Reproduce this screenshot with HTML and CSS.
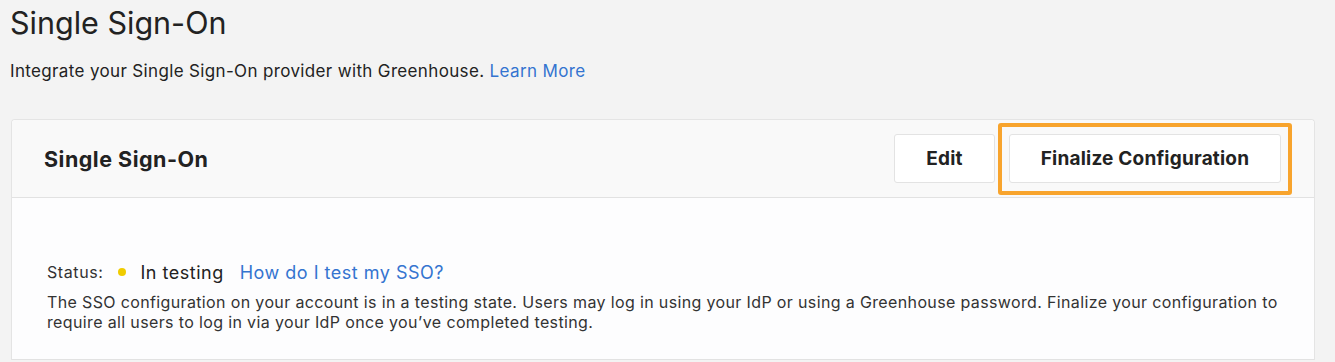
FILE: index.html
```html
<!DOCTYPE html>
<html lang="en">
<head>
<meta charset="utf-8">
<title>Single Sign-On</title>
<link rel="stylesheet" href="styles.css">
</head>
<body>
<main class="page">
  <h1 class="page-title">Single Sign-On</h1>
  <p class="page-intro">Integrate your Single Sign-On provider with Greenhouse. <a class="link" href="#">Learn More</a></p>

  <section class="card">
    <header class="card-header">
      <h2 class="card-title">Single Sign-On</h2>
      <div class="actions">
        <button class="btn btn-edit" type="button">Edit</button>
        <div class="highlight">
          <button class="btn btn-finalize" type="button">Finalize Configuration</button>
        </div>
      </div>
    </header>
    <div class="card-body">
      <div class="status-row">
        <span class="status-label">Status:</span>
        <span class="status-dot"></span>
        <span class="status-value">In testing</span>
        <a class="link status-link" href="#">How do I test my SSO?</a>
      </div>
      <p class="status-desc">The SSO configuration on your account is in a testing state. Users may log in using your IdP or using a Greenhouse password. Finalize your configuration to require all users to log in via your IdP once you’ve completed testing.</p>
    </div>
  </section>
</main>
</body>
</html>
```

FILE: styles.css
```css
* { box-sizing: border-box; }

html, body {
  margin: 0;
  padding: 0;
}

body {
  background: #f3f3f3;
  font-family: Inter, "Liberation Sans", sans-serif;
  color: #222;
}

.page {
  padding: 5px 0 0 10px;
}

.page-title {
  margin: 0;
  font-size: 30.5px;
  font-weight: 400;
  line-height: 36px;
  color: #222;
}

.page-intro {
  margin: 18px 0 0;
  font-size: 17px;
  line-height: 24px;
  letter-spacing: 0.35px;
  color: #222;
}

.link {
  color: #3474d0;
  text-decoration: none;
}

.card {
  margin: 36px 0 0 1px;
  width: 1304px;
  border: 1px solid #e4e4e4;
  border-bottom: none;
  border-radius: 4px 4px 0 0;
  background: #fff;
}

.card-header {
  height: 78px;
  display: flex;
  align-items: center;
  justify-content: space-between;
  padding: 0 22px 0 32px;
  background: #f9f9f9;
  border-bottom: 1px solid #e2e2e2;
  border-radius: 4px 4px 0 0;
}

.card-title {
  margin: 0;
  font-size: 21.5px;
  font-weight: 700;
  letter-spacing: 0.5px;
  color: #222;
}

.actions {
  display: flex;
  align-items: center;
  gap: 3px;
}

.btn {
  height: 49px;
  background: #fff;
  border: 1px solid #e3e3e3;
  border-radius: 3px;
  font-family: inherit;
  font-size: 19px;
  font-weight: 700;
  letter-spacing: 0.2px;
  color: #222;
  cursor: pointer;
}

.btn-edit {
  width: 101px;
}

.highlight {
  border: 4px solid #f8a42d;
  border-radius: 3px;
  padding: 7px 7px 8px;
}

.btn-finalize {
  width: 272px;
  display: block;
}

.card-body {
  height: 162px;
  padding: 62px 35px 0;
  background: #fdfdfe;
  border-bottom: 1px solid #e2e2e2;
}

.status-row {
  display: flex;
  align-items: center;
  height: 24px;
  font-size: 18px;
  letter-spacing: 0.5px;
}

.status-label {
  font-size: 16px;
  letter-spacing: 0.6px;
  color: #333;
}

.status-dot {
  width: 8px;
  height: 8px;
  border-radius: 50%;
  background: #f0cc00;
  margin: 0 15px 0 14px;
}

.status-value {
  color: #222;
}

.status-link {
  margin-left: 16px;
}

.status-desc {
  margin: 8px 0 0;
  font-size: 16px;
  line-height: 20px;
  letter-spacing: 0.36px;
  color: #333;
}
```
